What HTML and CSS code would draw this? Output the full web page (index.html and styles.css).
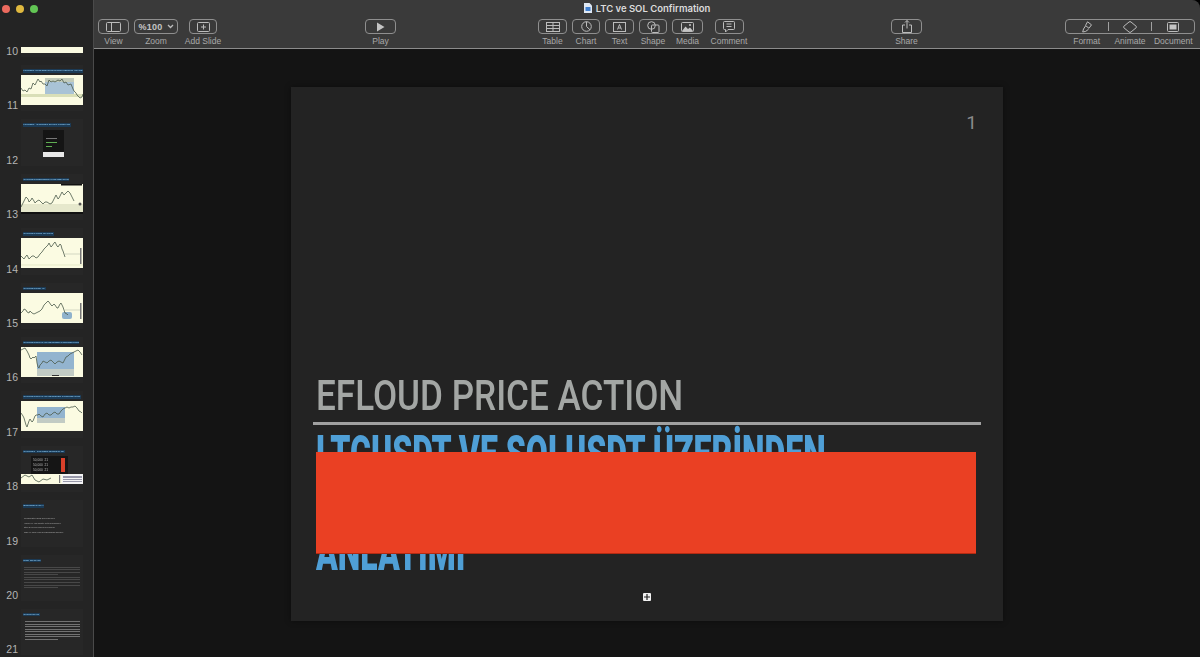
FILE: index.html
```html
<!DOCTYPE html>
<html lang="tr">
<head>
    <meta charset="UTF-8">
    <title>LTC ve SOL Confirmation</title>
    <link rel="stylesheet" href="styles.css">
</head>
<body>
<div class="app">
    <aside class="sidebar">
        <div class="traffic">
            <span class="light red"></span>
            <span class="light yellow"></span>
            <span class="light green"></span>
        </div>
        <div class="thumb-list">
            <div class="thumb-row">
                <span class="thumb-num">10</span>
                <div class="thumb thumb-end"><div class="chart chart-stub"></div></div>
            </div>
            <div class="thumb-row">
                <span class="thumb-num">11</span>
                <div class="thumb">
                    <div class="thumb-title">LTCUSDT CONFIRMATION SHORT TEKRAR ANALİZ</div>
                    <svg class="chart" viewBox="0 0 62 30">
                        <rect width="62" height="30" fill="#fbfbe2"/>
                        <rect x="24" y="3" width="29" height="16" fill="#a9c3d6"/>
                        <rect x="24" y="3" width="29" height="4" fill="#c3ccbb"/>
                        <rect x="0" y="19" width="62" height="3" fill="#d9dfb8"/>
                        <polyline class="line" points="0,13 2,16 4,15 6,17 8,13 10,14 12,8 14,10 17,4 19,7 20,6 22,9 24,9 26,11 28,5 30,7 32,6 34,7 37,5 39,6 41,4 43,8 45,7 47,10 50,9 52,14 53,16 55,18 56,20 58,22 59,23 61,22 62,19"/>
                    </svg>
                </div>
            </div>
            <div class="thumb-row">
                <span class="thumb-num">12</span>
                <div class="thumb">
                    <div class="thumb-title">LTCUSDT - SOLUSDT SHORT POZİSYON</div>
                    <div class="mini-screen">
                        <div class="mini-dark">
                            <span class="mini-gray"></span>
                            <span class="mini-green"></span>
                            <span class="mini-green short"></span>
                        </div>
                        <div class="mini-white"></div>
                    </div>
                </div>
            </div>
            <div class="thumb-row">
                <span class="thumb-num">13</span>
                <div class="thumb">
                    <div class="thumb-title">SOLUSDT ÜZERİNDEN CONFIRMATION</div>
                    <svg class="chart" viewBox="0 0 62 30">
                        <rect width="62" height="30" fill="#fbfbe2"/>
                        <rect x="0" y="20" width="62" height="8" fill="#e6e8cc"/>
                        <rect x="40" y="0" width="21" height="1.5" fill="#111"/>
                        <rect x="0" y="28" width="62" height="2" fill="#111"/>
                        <polyline class="line" points="0,23 2,19 3,17 5,13 7,15 8,18 10,16 11,14 13,17 14,19 16,17 18,16 20,18 22,20 24,18 26,18 29,20 31,19 33,15 35,11 37,15 38,14 40,10 41,8 43,11 44,10 46,8 47,7 49,9 50,11 52,15 53,17"/>
                        <circle cx="59" cy="20" r="1.5" fill="#555"/>
                    </svg>
                </div>
            </div>
            <div class="thumb-row">
                <span class="thumb-num">14</span>
                <div class="thumb">
                    <div class="thumb-title">SOLUSDT GİRİŞ VE ÇIKIŞ</div>
                    <svg class="chart" viewBox="0 0 62 30">
                        <rect width="62" height="30" fill="#fbfbe2"/>
                        <line x1="44" y1="16" x2="60" y2="16" stroke="#b8c0b0" stroke-width=".6"/>
                        <line x1="0" y1="27" x2="62" y2="27" stroke="#d9dfb8" stroke-width=".6"/>
                        <polyline class="line" points="0,18 2,20 3,21 5,18 6,17 8,21 9,20 11,18 13,18 15,20 17,19 19,16 21,14 23,11 25,9 27,7 28,5 30,9 31,8 33,5 34,4 36,8 37,9 39,6 40,7 41,11 42,13 43,16 44,19"/>
                        <rect x="59" y="10" width="1.5" height="16" fill="#777"/>
                    </svg>
                </div>
            </div>
            <div class="thumb-row">
                <span class="thumb-num">15</span>
                <div class="thumb">
                    <div class="thumb-title">SOLUSDT RISK AL</div>
                    <svg class="chart" viewBox="0 0 62 30">
                        <rect width="62" height="30" fill="#fbfbe2"/>
                        <line x1="44" y1="17" x2="60" y2="17" stroke="#b8c0b0" stroke-width=".6"/>
                        <rect x="41" y="19" width="10" height="7" rx="2" fill="#8fb2cc"/>
                        <polyline class="line" points="0,20 2,18 3,16 5,17 6,19 8,20 9,18 11,20 13,21 15,20 17,19 19,18 21,16 23,12 25,10 27,8 28,9 30,12 31,13 33,11 34,12 36,15 37,15 39,11 40,10 41,12 42,14 43,17 44,20 46,21 47,22"/>
                        <rect x="59" y="10" width="1.5" height="16" fill="#777"/>
                    </svg>
                </div>
            </div>
            <div class="thumb-row">
                <span class="thumb-num">16</span>
                <div class="thumb">
                    <div class="thumb-title">SOLUSDT RECAL UP REVERSE CONFIRMATION</div>
                    <svg class="chart" viewBox="0 0 62 30">
                        <rect width="62" height="30" fill="#fbfbe2"/>
                        <rect x="16" y="5" width="37" height="17" fill="#93b4cf"/>
                        <rect x="16" y="22" width="37" height="7" fill="#c2cbc4"/>
                        <rect x="31" y="28" width="7" height="1" fill="#333"/>
                        <polyline class="line" points="0,3 2,2 4,1 6,4 8,8 9,11 10,12 12,10 13,11 15,9 16,16 17,20 18,21 19,18 21,16 22,14 24,15 26,16 28,14 30,13 32,15 34,17 36,15 38,14 40,15 42,16 44,12 45,10 47,9 49,7 51,6 53,5 55,4 57,3 59,5 61,8"/>
                    </svg>
                </div>
            </div>
            <div class="thumb-row">
                <span class="thumb-num">17</span>
                <div class="thumb">
                    <div class="thumb-title">SOLUSDT RECAL UP RETESTER CONFIRMATION</div>
                    <svg class="chart" viewBox="0 0 62 30">
                        <rect width="62" height="30" fill="#fbfbe2"/>
                        <rect x="16" y="6" width="28" height="11" fill="#93b4cf"/>
                        <rect x="16" y="17" width="28" height="5" fill="#c2cbc4"/>
                        <polyline class="line" points="0,12 2,15 3,17 5,24 6,26 8,20 9,18 11,21 12,20 14,15 15,14 17,14 18,13 20,15 22,16 24,13 26,12 28,14 30,14 32,12 34,11 36,13 38,13 40,10 42,8 44,7 46,6 48,7 50,6 52,6 54,5 56,7 58,10 60,11 61,12"/>
                    </svg>
                </div>
            </div>
            <div class="thumb-row">
                <span class="thumb-num">18</span>
                <div class="thumb">
                    <div class="thumb-title">SOLUSDT - SOLUSDT BAREİLLİ UP</div>
                    <div class="table-shot">
                        <span class="table-text">50,000 &nbsp;21<br>50,000 &nbsp;21<br>50,000 &nbsp;21</span>
                        <span class="table-red"></span>
                    </div>
                    <div class="split-shot">
                        <svg class="split-chart" viewBox="0 0 41 10" preserveAspectRatio="none">
                            <rect width="41" height="10" fill="#fbfbe2"/>
                            <polyline class="line" points="0,4 4,1 8,3 11,1 14,6 18,8 22,5 26,6 30,4"/>
                            <rect x="38" y="1" width="1.2" height="8" fill="#777"/>
                        </svg>
                        <div class="split-note">
                            <span></span><span></span><span></span><span></span>
                        </div>
                    </div>
                </div>
            </div>
            <div class="thumb-row">
                <span class="thumb-num">19</span>
                <div class="thumb">
                    <div class="thumb-title">BİLDİRİMİ SAKLA</div>
                    <ul class="thumb-bullets">
                        <li>Confirmation giriş için beklemek</li>
                        <li>Hacim ve yön birlikte değerlendirilmeli</li>
                        <li>Stop seviyesi önceden belirlenir</li>
                        <li>Risk ve ödül oranı hesaplanarak girilmeli</li>
                    </ul>
                </div>
            </div>
            <div class="thumb-row">
                <span class="thumb-num">20</span>
                <div class="thumb">
                    <div class="thumb-title">RİSK NOTLARI</div>
                    <div class="text-block">
                        <span></span><span></span><span></span><span class="short"></span><span></span><span></span><span></span><span></span><span class="short"></span>
                    </div>
                </div>
            </div>
            <div class="thumb-row">
                <span class="thumb-num">21</span>
                <div class="thumb">
                    <div class="thumb-title">SON NOTLAR</div>
                    <div class="text-block bright">
                        <span></span><span></span><span></span><span></span><span></span><span></span><span></span><span class="short"></span>
                    </div>
                </div>
            </div>
        </div>
    </aside>

    <div class="workspace">
        <header class="toolbar">
            <div class="doc-title">
                <svg class="doc-icon" width="8" height="10" viewBox="0 0 8 10">
                    <path d="M0 0h5.500l2.500 2.500v7.500h-8z" fill="#dfe8f4"/>
                    <rect x="1.500" y="4" width="5" height="4" fill="#3f7fd0"/>
                </svg>
                <span>LTC ve SOL Confirmation</span>
            </div>
            <div class="tools">
                <div class="tool-group">
                    <div class="tool w-view">
                        <div class="tool-btn">
                            <svg width="15" height="10" viewBox="0 0 15 10"><rect class="ico" x=".5" y=".5" width="14" height="9" rx="1"/><path class="ico" d="M5.500 .5v9"/></svg>
                        </div>
                        <span class="tool-label">View</span>
                    </div>
                    <div class="tool w-zoom">
                        <div class="tool-btn zoom-btn">
                            <span>%100</span>
                            <svg width="7" height="5" viewBox="0 0 7 5"><path class="ico thick" d="M1 1l2.500 2.500 2.500-2.500"/></svg>
                        </div>
                        <span class="tool-label">Zoom</span>
                    </div>
                    <div class="tool w-add">
                        <div class="tool-btn btn-add">
                            <svg width="13" height="10" viewBox="0 0 13 10"><rect class="ico" x=".5" y=".5" width="12" height="9" rx="1"/><path class="ico" d="M6.500 2.500v5M4 5h5"/></svg>
                        </div>
                        <span class="tool-label">Add Slide</span>
                    </div>
                </div>

                <div class="tool-group group-play">
                    <div class="tool w-view">
                        <div class="tool-btn">
                            <svg width="9" height="10" viewBox="0 0 9 10"><path d="M1 .5l7.500 4.500-7.500 4.500z" fill="#c4c4c4"/></svg>
                        </div>
                        <span class="tool-label">Play</span>
                    </div>
                </div>

                <div class="tool-group group-insert">
                    <div class="tool w-table">
                        <div class="tool-btn">
                            <svg width="14" height="10" viewBox="0 0 14 10"><rect class="ico" x=".5" y=".5" width="13" height="9"/><path class="ico" d="M.5 3.500h13M.5 6.500h13M7 .5v9"/></svg>
                        </div>
                        <span class="tool-label">Table</span>
                    </div>
                    <div class="tool w-chart">
                        <div class="tool-btn">
                            <svg width="11" height="11" viewBox="0 0 11 11"><circle class="ico" cx="5.500" cy="5.500" r="4.800"/><path class="ico" d="M5.500 .7v4.800l3.500 3.300"/></svg>
                        </div>
                        <span class="tool-label">Chart</span>
                    </div>
                    <div class="tool w-text">
                        <div class="tool-btn">
                            <svg width="13" height="10" viewBox="0 0 13 10"><rect class="ico" x=".5" y=".5" width="12" height="9"/><path class="ico" d="M4.500 7.500l2-5 2 5M5.200 6h2.600"/></svg>
                        </div>
                        <span class="tool-label">Text</span>
                    </div>
                    <div class="tool w-chart">
                        <div class="tool-btn">
                            <svg width="13" height="12" viewBox="0 0 13 12"><circle class="ico" cx="4.500" cy="4.500" r="3.800"/><rect class="ico" x="4.500" y="4" width="7.500" height="7.500" rx="1" fill="#3a3a3a"/></svg>
                        </div>
                        <span class="tool-label">Shape</span>
                    </div>
                    <div class="tool w-view">
                        <div class="tool-btn">
                            <svg width="13" height="10" viewBox="0 0 13 10"><rect class="ico" x=".5" y=".5" width="12" height="9" rx="1"/><path d="M1 9l3.500-4.500 2.500 2.500 2-1.500 3 3.500z" fill="#c4c4c4"/><circle cx="9" cy="3" r="1" fill="#c4c4c4"/></svg>
                        </div>
                        <span class="tool-label">Media</span>
                    </div>
                    <div class="tool w-comment">
                        <div class="tool-btn btn-comment">
                            <svg width="12" height="12" viewBox="0 0 12 12"><path class="ico" d="M1.500 .5h9a1 1 0 0 1 1 1v6a1 1 0 0 1-1 1h-5.500l-2.500 2.500v-2.500h-1a1 1 0 0 1-1-1v-6a1 1 0 0 1 1-1z"/><path class="ico" d="M3.500 3h5M3.500 5.500h5"/></svg>
                        </div>
                        <span class="tool-label">Comment</span>
                    </div>
                </div>

                <div class="tool-group group-share">
                    <div class="tool w-share">
                        <div class="tool-btn">
                            <svg width="10" height="13" viewBox="0 0 10 13"><path class="ico" d="M3 5h-2.500v7.500h9v-7.500h-2.500M5 8.500v-8M3 2.500l2-2 2 2"/></svg>
                        </div>
                        <span class="tool-label">Share</span>
                    </div>
                </div>

                <div class="tool-group group-inspect">
                    <div class="inspect">
                        <div class="inspect-btn">
                            <div class="inspect-cell">
                                <svg width="11" height="12" viewBox="0 0 11 12"><path class="ico" d="M5.500 .8l4 3-2.500 3.500-3.500-2.800zM3.500 5l-2 3-.8 3 3-.6 2.800-2.100"/></svg>
                            </div>
                            <div class="inspect-cell">
                                <svg width="14" height="12" viewBox="0 0 14 12"><path class="ico" d="M6 1l-5.200 4.300a1 1 0 0 0 0 1.400l5.200 4.300a1.500 1.500 0 0 0 2 0l5.200-4.300a1 1 0 0 0 0-1.400l-5.200-4.300a1.500 1.500 0 0 0-2 0z"/></svg>
                            </div>
                            <div class="inspect-cell">
                                <svg width="12" height="10" viewBox="0 0 12 10"><rect class="ico" x=".5" y=".5" width="11" height="9" rx="1"/><rect x="2.500" y="2.500" width="7" height="5" fill="#c4c4c4"/></svg>
                            </div>
                        </div>
                        <div class="inspect-labels">
                            <span class="tool-label">Format</span>
                            <span class="tool-label">Animate</span>
                            <span class="tool-label">Document</span>
                        </div>
                    </div>
                </div>
            </div>
        </header>

        <main class="canvas">
            <section class="slide">
                <div class="slide-num">1</div>
                <h1 class="slide-title">EFLOUD PRICE ACTION</h1>
                <div class="slide-rule"></div>
                <h2 class="slide-sub">
                    <span class="sub-line">LTCUSDT VE SOLUSDT ÜZERİNDEN</span>
                    <span class="sub-line">&nbsp;</span>
                    <span class="sub-line">ANLATIMI</span>
                </h2>
                <div class="redact"></div>
                <svg class="handle" width="8" height="8" viewBox="0 0 8 8">
                    <rect width="8" height="8" rx="1" fill="#f2f2f2"/>
                    <path d="M4 1v6M1 4h6" stroke="#222" stroke-width="1.200"/>
                </svg>
            </section>
        </main>
    </div>
</div>
</body>
</html>
```
FILE: styles.css
```css
* {
    box-sizing: border-box;
}

html, body {
    margin: 0;
    height: 100%;
    background-color: #000;
    overflow: hidden;
}

body {
    font-family: "Liberation Sans", Arial, sans-serif;
}

.app {
    display: flex;
    height: 657px;
    border-top-right-radius: 8px;
    overflow: hidden;
}

/* left slide navigator */
.sidebar {
    width: 94px;
    flex: none;
    height: 100%;
    background-color: #242424;
    border-right: 1px solid #4a4a4a;
    display: flex;
    flex-direction: column;
    overflow: hidden;
}

.traffic {
    flex: none;
    height: 47px;
    display: flex;
    gap: 6px;
    padding: 5px 0 0 2px;
    background-color: #242424;
    position: relative;
    z-index: 1;
}

.light {
    width: 8px;
    height: 8px;
    border-radius: 50%;
}

.light.red { background-color: #ec6a5e; }
.light.yellow { background-color: #e0b93f; }
.light.green { background-color: #62c554; }

.thumb-list {
    margin-top: -36.400px;
    display: flex;
    flex-direction: column;
}

.thumb-row {
    flex: none;
    height: 54.400px;
    display: flex;
    align-items: flex-end;
    padding-bottom: 8px;
}

.thumb-num {
    width: 18px;
    text-align: right;
    font-size: 10.500px;
    line-height: 11px;
    color: #b5b5b5;
    margin-right: 3px;
}

.thumb {
    width: 62px;
    height: 46.400px;
    background-color: #272727;
    padding-top: 4px;
    display: flex;
    flex-direction: column;
    overflow: hidden;
    filter: blur(.3px);
}

.thumb-end {
    justify-content: flex-end;
    padding-bottom: 4px;
}

.thumb-title {
    align-self: flex-start;
    margin: 0 0 2.500px 2px;
    height: 3.500px;
    padding: 0 .5px;
    font-size: 2.400px;
    line-height: 3.500px;
    font-weight: bold;
    white-space: nowrap;
    color: #8cc8f0;
    background-color: #1b3a55;
}

.chart {
    display: block;
    width: 62px;
    height: 30px;
    flex: none;
}

.chart-stub {
    background-color: #fbfbe2;
}

.line {
    fill: none;
    stroke: #4d5c4d;
    stroke-width: .8;
}

.mini-screen {
    width: 21px;
    margin: 1px 0 0 22px;
}

.mini-dark {
    height: 22px;
    background-color: #151515;
    padding: 8px 3px 0;
    display: flex;
    flex-direction: column;
    gap: 3px;
}

.mini-dark span {
    display: block;
    height: 1px;
    width: 11px;
}

.mini-gray { background-color: #777; }
.mini-dark .mini-green { background-color: #5fae52; }
.mini-dark .mini-green.short { width: 6px; }

.mini-white {
    height: 5px;
    background-color: #e8e8e8;
}

.table-shot {
    width: 37px;
    height: 18px;
    margin-left: 10px;
    background-color: #151515;
    display: flex;
    justify-content: space-between;
    padding: 2px 3px 0 2px;
}

.table-text {
    font-size: 3.200px;
    line-height: 5px;
    color: #bbb;
    white-space: nowrap;
}

.table-red {
    width: 4px;
    height: 14px;
    background-color: #d8402a;
}

.split-shot {
    display: flex;
    height: 10px;
}

.split-chart {
    width: 41px;
    height: 10px;
    display: block;
}

.split-note {
    width: 21px;
    background-color: #f4f4f4;
    padding: 2px 1px;
    display: flex;
    flex-direction: column;
    gap: 1px;
}

.split-note span {
    display: block;
    height: .7px;
    background-color: #99a;
}

.thumb-bullets {
    list-style: none;
    margin: 6px 0 0 3px;
    padding: 0;
    font-size: 2.200px;
    line-height: 4.500px;
    color: #b0b0b0;
    white-space: nowrap;
}

.text-block {
    margin: 2px 3px 0;
    display: flex;
    flex-direction: column;
    gap: 1.600px;
}

.text-block span {
    display: block;
    height: 1px;
    background-color: #484848;
}

.text-block span.short {
    width: 60%;
}

.text-block.bright {
    margin-left: 4px;
}

.text-block.bright span {
    background-color: #727272;
}

/* toolbar + slide area */
.workspace {
    flex: 1;
    min-width: 0;
    display: flex;
    flex-direction: column;
    background-color: #141414;
}

.toolbar {
    flex: none;
    height: 49px;
    background-color: #3a3a3a;
    border-bottom: 1px solid #8c8c8c;
}

.doc-title {
    height: 18px;
    display: flex;
    justify-content: center;
    align-items: center;
    gap: 4px;
    padding: 0 0 2px 0;
    font-family: "Inter", sans-serif;
    font-size: 9.500px;
    font-weight: 600;
    color: #dcdcdc;
}

.doc-icon {
    flex: none;
}

.tools {
    display: flex;
    padding: 1px 0 0 4px;
}

.tool-group {
    display: flex;
    gap: 5px;
}

.group-play { margin-left: 144px; }
.group-insert { margin-left: 142px; }
.group-share { margin-left: 144px; }
.group-inspect { margin-left: 143px; }

.tool {
    display: flex;
    flex-direction: column;
    align-items: center;
}

.w-view { width: 31px; }
.w-zoom { width: 44px; }
.w-add { width: 36px; margin-left: 2px; }
.w-table { width: 29px; }
.w-chart { width: 28px; }
.w-text { width: 29px; }
.w-comment { width: 36px; margin-left: 3px; }
.w-share { width: 31px; }

.tool-btn {
    width: 100%;
    height: 15px;
    border: 1px solid #8f8f8f;
    border-radius: 4px;
    display: flex;
    align-items: center;
    justify-content: center;
}

.btn-add {
    width: 28px;
}

.btn-comment {
    width: 29px;
}

.zoom-btn {
    gap: 4px;
    font-size: 9px;
    font-weight: bold;
    color: #c4c4c4;
    letter-spacing: .3px;
}

.tool-label {
    margin-top: 2px;
    font-size: 8.500px;
    line-height: 11px;
    color: #a9a9a9;
    white-space: nowrap;
}

.ico {
    fill: none;
    stroke: #bcbcbc;
    stroke-width: 1;
}

.ico.thick {
    stroke-width: 1.300;
}

.inspect {
    width: 130px;
}

.inspect-btn {
    height: 15px;
    border: 1px solid #8f8f8f;
    border-radius: 4px;
    display: flex;
    align-items: center;
}

.inspect-cell {
    flex: 1;
    height: 9px;
    display: flex;
    align-items: center;
    justify-content: center;
    border-right: 1px solid #a0a0a0;
}

.inspect-cell:last-child {
    border-right: none;
}

.inspect-labels {
    display: flex;
}

.inspect-labels .tool-label {
    flex: 1;
    text-align: center;
}

.canvas {
    flex: 1;
    display: flex;
    align-items: center;
    justify-content: center;
    padding-top: 2px;
}

.slide {
    position: relative;
    width: 712px;
    height: 534px;
    background-color: #232323;
    display: flex;
    flex-direction: column;
    padding: 0 22px 0 22px;
    box-shadow: 0 0 6px rgba(0, 0, 0, 0.4);
}

.slide-num {
    align-self: flex-end;
    margin: 26px 4px 0 0;
    font-family: "Roboto", sans-serif;
    font-size: 19px;
    line-height: 20px;
    color: #8a8a8a;
}

.slide-title {
    margin: 238px 0 0 3px;
    font-family: "Roboto", sans-serif;
    font-size: 42px;
    line-height: 50px;
    font-weight: 500;
    color: #a3a6a4;
    white-space: nowrap;
    transform: scaleX(.835);
    transform-origin: left center;
}

.slide-rule {
    margin-top: 1px;
    height: 3px;
    background-color: #a0a0a0;
}

.slide-sub {
    margin: 5px 0 0 3px;
    font-family: "Roboto", sans-serif;
    font-size: 50px;
    line-height: 49.500px;
    font-weight: 900;
    color: #4f9fd6;
    transform: scaleX(.64);
    transform-origin: left center;
}

.sub-line {
    display: block;
    white-space: nowrap;
}

.redact {
    position: absolute;
    left: 25px;
    top: 365px;
    width: 660px;
    height: 102px;
    background-color: #ea4023;
    border-bottom: 1px solid #b32a12;
}

.handle {
    position: absolute;
    left: 352px;
    top: 506px;
}
```
